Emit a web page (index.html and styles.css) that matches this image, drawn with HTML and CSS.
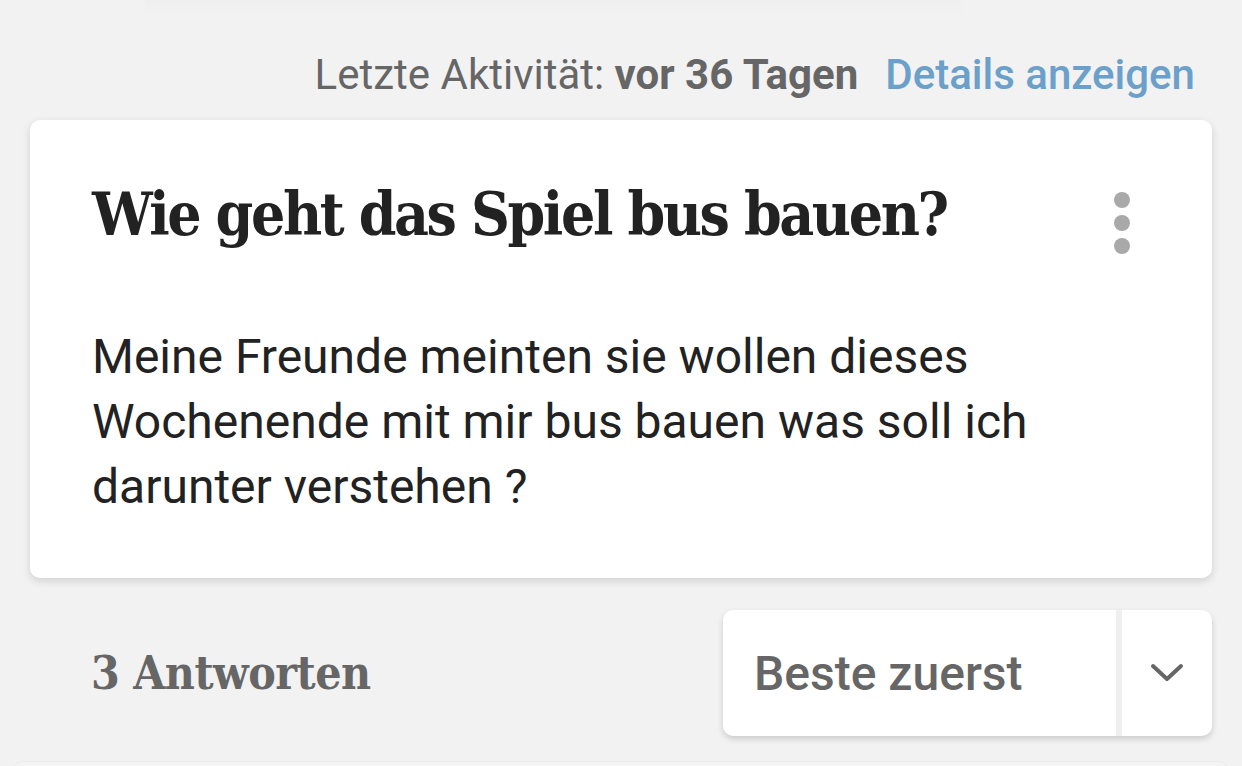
FILE: index.html
```html
<!DOCTYPE html>
<html lang="de">
<head>
    <meta charset="UTF-8">
    <meta name="viewport" content="width=device-width, initial-scale=1.0">
    <title>Wie geht das Spiel bus bauen?</title>
    <link rel="stylesheet" href="styles.css">
</head>
<body>
    <div class="page">
        <!-- faded edge of the section above -->
        <div class="faded-line"></div>

        <div class="meta">
            <span class="meta-label">Letzte Aktivität: <strong>vor 36 Tagen</strong></span>
            <a class="meta-link" href="#">Details anzeigen</a>
        </div>

        <div class="question-card">
            <div class="question-head">
                <h1>Wie geht das Spiel bus bauen?</h1>
                <button class="more-btn" aria-label="Mehr">
                    <span></span><span></span><span></span>
                </button>
            </div>
            <p class="question-text">Meine Freunde meinten sie wollen dieses Wochenende mit mir bus bauen was soll ich darunter verstehen ?</p>
        </div>

        <div class="answers-bar">
            <h2>3 Antworten</h2>
            <div class="sort-select">
                <div class="sort-value">Beste zuerst</div>
                <div class="sort-toggle">
                    <svg width="34" height="20" viewBox="0 0 34 20">
                        <path d="M3 3 L17 16 L31 3" fill="none" stroke="#666" stroke-width="4" stroke-linecap="round" stroke-linejoin="round"/>
                    </svg>
                </div>
            </div>
        </div>

        <div class="next-card"></div>
    </div>
</body>
</html>
```

FILE: styles.css
```css
* {
    margin: 0;
    padding: 0;
    box-sizing: border-box;
}

body {
    background: #f2f2f2;
    font-family: Roboto, "Noto Sans", sans-serif;
    color: #222;
    overflow: hidden;
}

.page {
    padding: 0 30px;
}

.faded-line {
    height: 16px;
    margin: 0 250px 0 115px;
    background: linear-gradient(#efefef, #f2f2f2);
}

.meta {
    display: flex;
    justify-content: flex-end;
    align-items: baseline;
    gap: 27px;
    padding-right: 17px;
    height: 104px;
    padding-top: 34px;
    font-size: 42px;
    line-height: 50px;
}

.meta-label {
    color: #666;
}

.meta-label strong {
    font-weight: 700;
}

.meta-link {
    color: #6aa0c9;
    font-weight: 500;
    text-decoration: none;
}

.question-card {
    background: #fff;
    border-radius: 10px;
    box-shadow: 0 3px 8px rgba(0, 0, 0, 0.14);
    padding: 52px 62px 59px;
}

.question-head {
    display: flex;
    justify-content: space-between;
    align-items: flex-start;
}

.question-head h1 {
    font-family: "DejaVu Serif", serif;
    font-stretch: condensed;
    font-weight: 700;
    font-size: 60px;
    line-height: 84px;
    color: #222;
    letter-spacing: -2.4px;
}

.more-btn {
    display: flex;
    flex-direction: column;
    gap: 7px;
    background: none;
    border: none;
    margin-top: 20px;
    margin-right: 20px;
}

.more-btn span {
    width: 16px;
    height: 16px;
    border-radius: 50%;
    background: #a9a9a9;
}

.question-text {
    margin-top: 68px;
    font-size: 48px;
    line-height: 65px;
    color: #222;
    max-width: 1000px;
}

.answers-bar {
    display: flex;
    justify-content: space-between;
    align-items: center;
    margin-top: 32px;
}

.answers-bar h2 {
    font-family: "DejaVu Serif", serif;
    font-stretch: condensed;
    font-weight: 700;
    font-size: 46px;
    color: #666;
    padding-left: 61px;
    letter-spacing: -0.5px;
}

.sort-select {
    display: flex;
    width: 489px;
    height: 126px;
    background: #fff;
    border-radius: 10px;
    box-shadow: 0 3px 6px rgba(0, 0, 0, 0.16);
}

.sort-value {
    flex: 1;
    display: flex;
    align-items: center;
    padding-left: 31px;
    font-size: 48px;
    font-weight: 500;
    color: #666;
    border-right: 6px solid #efefef;
}

.sort-toggle {
    width: 90px;
    display: flex;
    align-items: center;
    justify-content: center;
}

.next-card {
    margin: 26px -17px 0;
    height: 40px;
    border-radius: 10px;
    background: #f3f3f3;
    box-shadow: 0 -1px 2px rgba(0, 0, 0, 0.04);
}
```
